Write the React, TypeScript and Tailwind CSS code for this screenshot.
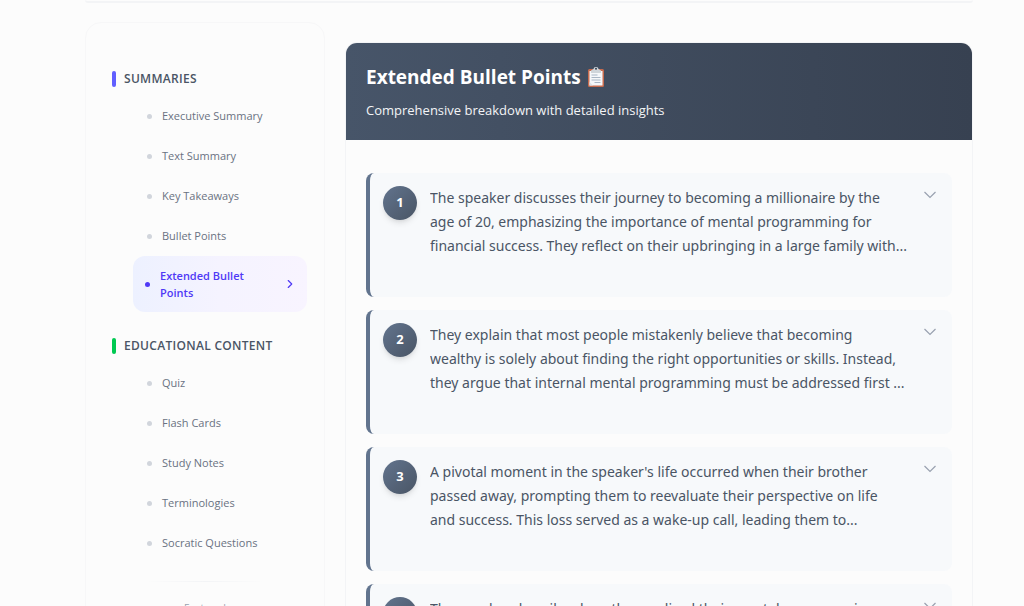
import { useState } from "react";
import { ChevronRight } from "lucide-react";

interface NavSection {
  title: string;
  barClass: string;
  items: string[];
}

interface BulletPoint {
  id: number;
  text: string;
}

const sections: NavSection[] = [
  {
    title: "Summaries",
    barClass: "bg-indigo-500",
    items: [
      "Executive Summary",
      "Text Summary",
      "Key Takeaways",
      "Bullet Points",
      "Extended Bullet Points",
    ],
  },
  {
    title: "Educational Content",
    barClass: "bg-green-500",
    items: ["Quiz", "Flash Cards", "Study Notes", "Terminologies", "Socratic Questions"],
  },
];

const points: BulletPoint[] = [
  {
    id: 1,
    text: `The speaker discusses their journey to becoming a millionaire by the
age of 20, emphasizing the importance of mental programming for
financial success. They reflect on their upbringing in a large family with...`,
  },
  {
    id: 2,
    text: `They explain that most people mistakenly believe that becoming
wealthy is solely about finding the right opportunities or skills. Instead,
they argue that internal mental programming must be addressed first ...`,
  },
  {
    id: 3,
    text: `A pivotal moment in the speaker's life occurred when their brother
passed away, prompting them to reevaluate their perspective on life
and success. This loss served as a wake-up call, leading them to...`,
  },
  {
    id: 4,
    text: "The speaker describes how they realized their mental programming",
  },
];

function NavItem({ label, active, onClick }: { label: string; active: boolean; onClick: () => void }) {
  if (active) {
    return (
      <button
        onClick={onClick}
        aria-current="page"
        className="w-full flex items-center gap-2.5 rounded-xl bg-gradient-to-r from-[#edf1ff] via-[#f5f3ff] to-[#f8f4ff] pl-3 pr-2.5 py-[11px] text-left text-[11px] leading-[17px] font-semibold text-indigo-600 cursor-pointer"
      >
        <span className="size-[5px] shrink-0 rounded-full bg-indigo-600" />
        <span className="flex-1 pr-6">{label}</span>
        <ChevronRight size={14} className="shrink-0" />
      </button>
    );
  }

  return (
    <button
      onClick={onClick}
      className="w-full flex items-center gap-2.5 rounded-xl px-3.5 py-3 text-left text-[11px] leading-4 text-gray-500 cursor-pointer"
    >
      <span className="size-[5px] shrink-0 rounded-full bg-gray-300" />
      <span>{label}</span>
    </button>
  );
}

function Sidebar() {
  const [current, setCurrent] = useState("Extended Bullet Points");

  return (
    <aside className="w-60 shrink-0 rounded-2xl border border-[#f7f7f8] px-[17px] pt-[46px] pb-6">
      <nav className="flex flex-col gap-6">
        {sections.map((section) => (
          <div key={section.title}>
            <h3 className="flex items-center gap-2 pl-[9px] text-[12px] leading-5 font-semibold uppercase tracking-wide text-gray-600">
              <span className={`h-4 w-1 rounded-xs ${section.barClass}`} />
              {section.title}
            </h3>
            <div className="mt-[7px] pl-[30px]">
              {section.items.map((item) => (
                <NavItem
                  key={item}
                  label={item}
                  active={item === current}
                  onClick={() => setCurrent(item)}
                />
              ))}
            </div>
          </div>
        ))}
      </nav>
      <div className="mx-auto mt-[18px] h-px w-30 bg-gradient-to-r from-transparent via-gray-100 to-transparent" />
      <p className="mt-[18px] text-center text-[10px] leading-4 text-gray-400">Featured</p>
    </aside>
  );
}

function PointCard({ point }: { point: BulletPoint }) {
  const [open, setOpen] = useState(false);

  return (
    <li className="flex items-start rounded-lg border-l-4 border-slate-500 bg-[#f7f9fb] px-[13px] pt-[13px] pb-[39px]">
      <span className="flex size-8.5 shrink-0 items-center justify-center rounded-full bg-gradient-to-br from-slate-500 to-gray-600 text-[13px] font-bold text-white shadow-md">
        {point.id}
      </span>
      <p
        className={`ml-[13px] flex-1 min-h-[72px] whitespace-pre-line font-['Noto_Sans',sans-serif] text-[14px] leading-6 text-gray-600 ${open ? "" : "line-clamp-3"}`}
      >
        {point.text}
      </p>
      <button
        onClick={() => setOpen(!open)}
        aria-expanded={open}
        aria-label={`Toggle point ${point.id}`}
        className="p-[3px] text-gray-400 cursor-pointer"
      >
        <svg width="12" height="12" viewBox="0 0 12 12" fill="none" stroke="currentColor" strokeWidth="1.2">
          <path d="M0.5 3l5.5 5.5L11.5 3" />
        </svg>
      </button>
    </li>
  );
}

function ClipboardIcon() {
  return (
    <svg width="18" height="20" viewBox="0 0 18 20" aria-hidden="true">
      <rect x="1" y="2" width="16" height="18" rx="1.5" fill="#c66b4e" />
      <path d="M2.5 4h13v14.5h-13z" fill="#f5f7fa" />
      <path d="M4.5 8h6M4.5 10.5h9M4.5 13h9M7.5 15.5h6" stroke="#a9b6c5" strokeWidth="1" />
      <path d="M2.5 15l3.5 3.5H2.5z" fill="#dce2e8" />
      <path d="M4 6V3.5L6.5 2a2.5 2 0 0 1 5 0L14 3.5V6z" fill="#cfd5da" />
      <circle cx="9" cy="1.8" r="1" fill="#354152" />
    </svg>
  );
}

export default function App() {
  return (
    <div className="min-h-screen bg-[#fcfcfc] font-['Open_Sans','Noto_Sans',sans-serif]">
      <div className="ml-[85px] mr-[51px]">
        <div className="h-[3px] rounded-b-xl border-b-2 border-gray-100" />
        <div className="mt-[19px] flex items-start gap-5">
          <Sidebar />
          <main className="mt-5 min-w-0 flex-1 overflow-hidden rounded-xl border border-gray-100">
            <header className="bg-gradient-to-r from-[#475569] to-[#374151] px-5 pt-5 pb-5 text-white">
              <h1 className="flex items-center gap-1.5 text-[19px] leading-7 font-bold">
                Extended Bullet Points
                <ClipboardIcon />
              </h1>
              <p className="mt-[9px] text-[13px] leading-5 text-gray-100">
                Comprehensive breakdown with detailed insights
              </p>
            </header>
            <ul className="flex flex-col gap-[13px] px-5 pt-[33px] pb-8">
              {points.map((point) => (
                <PointCard key={point.id} point={point} />
              ))}
            </ul>
          </main>
        </div>
      </div>
    </div>
  );
}
